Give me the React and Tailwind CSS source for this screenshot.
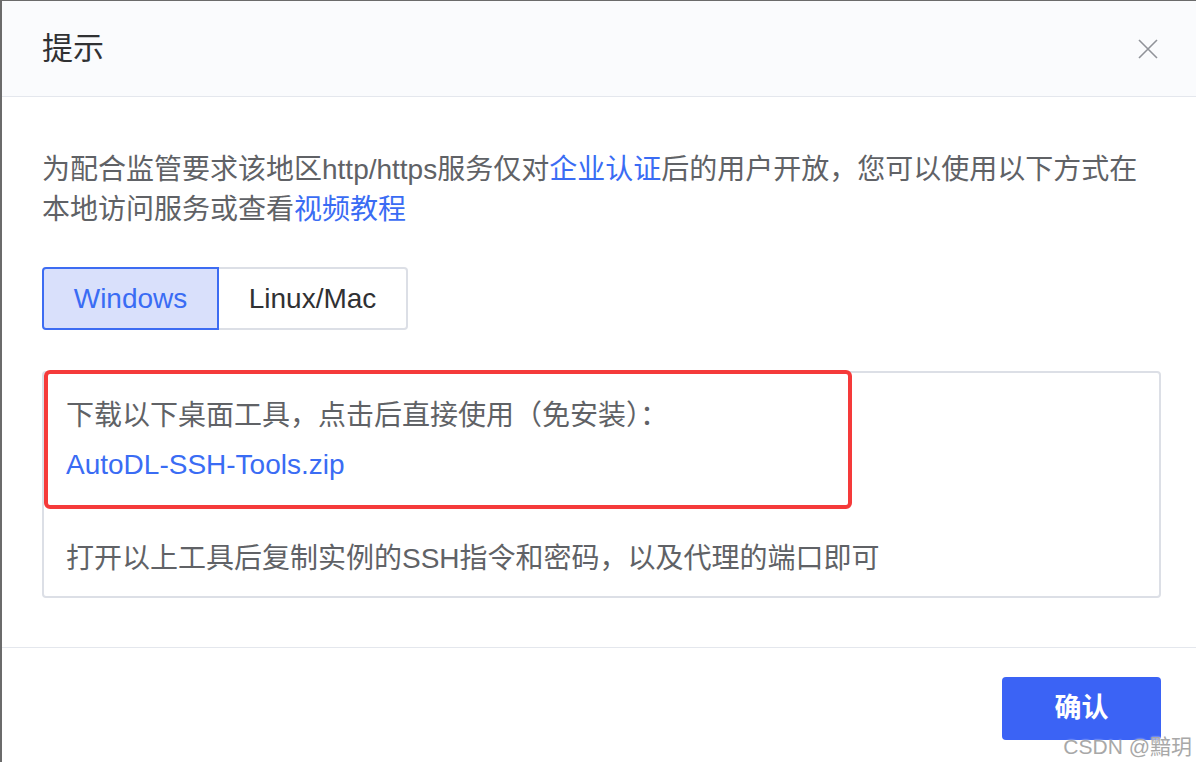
import { useState } from "react";

const font = { fontFamily: '"Liberation Sans", "Noto Sans CJK SC", sans-serif' };

const App = () => {
    const [tab, setTab] = useState("windows");

    return (
        <div className="w-[1196px] h-[762px] bg-[#6b6b6b] pl-[2px] pt-[1px] overflow-hidden" style={font}>
            <div className="relative h-full bg-white rounded-tl-[3px] flex flex-col">
                {/* header */}
                <div className="h-[96px] shrink-0 bg-[#fafbfd] border-b border-[#e4e7ed] flex items-center justify-between pl-[40px] pr-[37px]">
                    <span className="text-[31px] text-[#303133] leading-none">提示</span>
                    <svg width="22" height="22" viewBox="0 0 22 22" className="text-[#909399]">
                        <path d="M2 2 L20 20 M20 2 L2 20" stroke="currentColor" strokeWidth="1.6" />
                    </svg>
                </div>

                {/* body */}
                <div className="pl-[40px] pr-[35px] pt-[53px] pb-[49px] border-b border-[#e4e7ed]">
                    <p className="text-[28px] leading-[40px] text-[#606266]">
                        为配合监管要求该地区http/https服务仅对<span className="text-[#3a6cf4]">企业认证</span>后的用户开放，您可以使用以下方式在本地访问服务或查看<span className="text-[#3a6cf4]">视频教程</span>
                    </p>

                    <div className="flex mt-[37px]">
                        <button
                            onClick={() => setTab("windows")}
                            className={
                                tab === "windows"
                                    ? "h-[63px] w-[177px] text-[28px] rounded-l-[4px] border-2 border-[#3d6cf2] bg-[#d9e0fb] text-[#3a6cf4]"
                                    : "h-[63px] w-[177px] text-[28px] rounded-l-[4px] border-2 border-[#dcdfe6] bg-white text-[#303133]"
                            }
                        >
                            Windows
                        </button>
                        <button
                            onClick={() => setTab("linux")}
                            className={
                                tab === "linux"
                                    ? "h-[63px] w-[189px] text-[28px] rounded-r-[4px] border-2 border-[#3d6cf2] bg-[#d9e0fb] text-[#3a6cf4]"
                                    : "h-[63px] w-[189px] text-[28px] rounded-r-[4px] border-2 border-l-0 border-[#dcdfe6] bg-white text-[#303133]"
                            }
                        >
                            Linux/Mac
                        </button>
                    </div>

                    <div className="relative mt-[41px] h-[227px] border-2 border-[#dcdfe6] rounded-[4px] px-[22px] pt-[23px] text-[28px] leading-[40px] text-[#606266]">
                        <p>下载以下桌面工具，点击后直接使用（免安装）：</p>
                        <p className="mt-[9px] text-[#3a6cf4]">AutoDL-SSH-Tools.zip</p>
                        <p className="mt-[54px]">打开以上工具后复制实例的SSH指令和密码，以及代理的端口即可</p>

                        {/* red annotation */}
                        <div className="absolute left-0 top-[-3px] w-[808px] h-[139px] border-[4px] border-[#f53a3a] rounded-[6px]"></div>
                    </div>
                </div>

                {/* footer */}
                <div className="flex justify-end pr-[35px] pt-[29px]">
                    <button className="w-[159px] h-[63px] bg-[#3b63f5] text-white text-[27px] font-bold rounded-[4px]">
                        确认
                    </button>
                </div>

                <span
                    className="absolute right-[4px] bottom-[5px] text-[21px] text-[#a8a8a8] leading-none"
                    style={{ textShadow: "0 0 2px #fff" }}
                >
                    CSDN @黯玥
                </span>
            </div>
        </div>
    );
};

export default App;
